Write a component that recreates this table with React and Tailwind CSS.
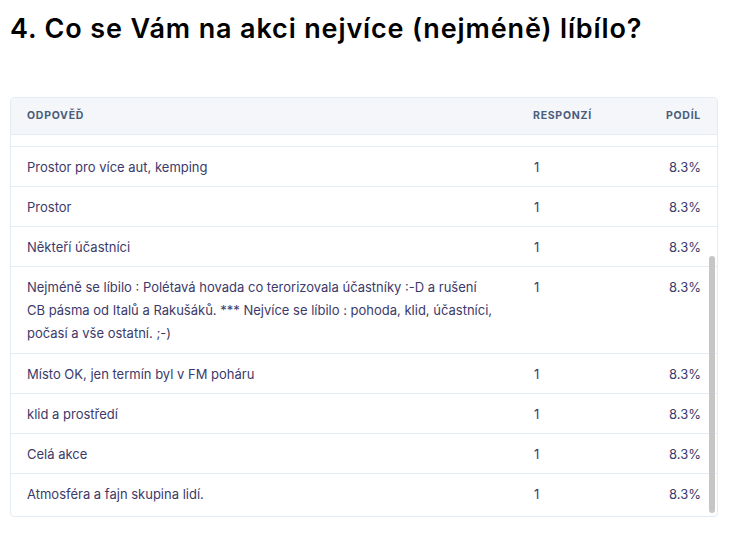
const rows = [
  { text: 'Prostor pro více aut, kemping', count: 1, share: '8.3%' },
  { text: 'Prostor', count: 1, share: '8.3%' },
  { text: 'Někteří účastníci', count: 1, share: '8.3%' },
  {
    text: 'Nejméně se líbilo : Polétavá hovada co terorizovala účastníky :-D a rušení CB pásma od Italů a Rakušáků. *** Nejvíce se líbilo : pohoda, klid, účastníci, počasí a vše ostatní. ;-)',
    count: 1,
    share: '8.3%',
  },
  { text: 'Místo OK, jen termín byl v FM poháru', count: 1, share: '8.3%' },
  { text: 'klid a prostředí', count: 1, share: '8.3%' },
  { text: 'Celá akce', count: 1, share: '8.3%' },
  { text: 'Atmosféra a fajn skupina lidí.', count: 1, share: '8.3%' },
];

export default function App() {
  return (
    <div className="w-[742px] h-[538px] bg-white font-['Inter',sans-serif] px-[10px] pt-[12px]">
      <h2 className="text-[27px] leading-[34px] font-semibold text-black tracking-[0.032em]">
        4. Co se Vám na akci nejvíce (nejméně) líbílo?
      </h2>

      <div className="relative mt-[51px] w-[708px] border border-[#e3ebf5] rounded-[4px] overflow-hidden">
        {/* header */}
        <div className="flex items-center h-[37px] bg-[#f4f6f9] border-b border-[#e3ebf5] text-[10.5px] font-bold tracking-[0.07em] text-[#4b5d7a] uppercase">
          <div className="flex-1 pl-[16px]">Odpověď</div>
          <div className="w-[120px]">Responzí</div>
          <div className="w-[64px] text-right pr-[16px]">Podíl</div>
        </div>

        {/* scrolled-off row remainder */}
        <div className="h-[12px] border-b border-[#e3ebf5]" />

        {rows.map((r, i) => {
          const last = i === rows.length - 1;
          const long = r.text.length > 80;
          return (
            <div
              key={i}
              className={`flex items-start text-[13px] leading-[23px] text-[#3c3a6a] pt-[9px] ${
                last ? 'pb-[10px]' : 'border-b border-[#e3ebf5]'
              } ${!last && long ? 'pb-[8px]' : ''} ${!last && !long ? 'pb-[7px]' : ''}`}
            >
              <div className="flex-1 pl-[16px] pr-[40px]">{r.text}</div>
              <div className="w-[120px] pl-[1px]">{r.count}</div>
              <div className="w-[64px] text-right pr-[16px]">{r.share}</div>
            </div>
          );
        })}

        {/* overlay scrollbar */}
        <div className="absolute right-[2px] top-[158px] bottom-[3px] w-[6px] rounded-full bg-[#c6c6c6]" />
      </div>
    </div>
  );
}
